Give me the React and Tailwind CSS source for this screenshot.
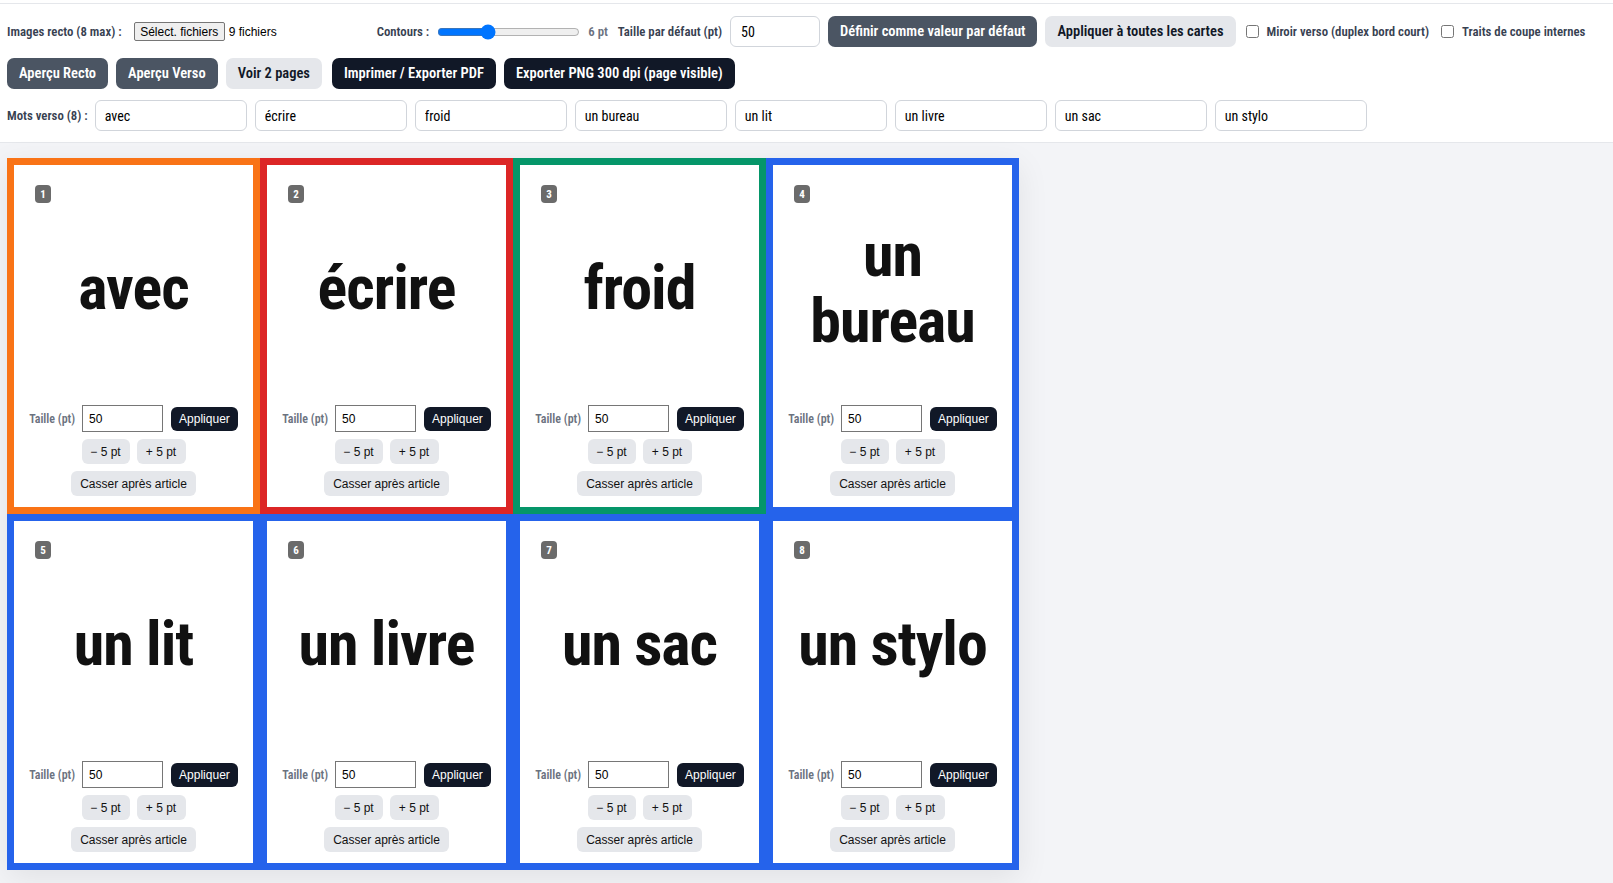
import React from "react";

const words = ["avec", "écrire", "froid", "un bureau", "un lit", "un livre", "un sac", "un stylo"];
const borders = [
  "border-[#f97316]",
  "border-[#dc2626]",
  "border-[#059669]",
  "border-[#2563eb]",
  "border-[#2563eb]",
  "border-[#2563eb]",
  "border-[#2563eb]",
  "border-[#2563eb]",
];

const COND = "font-['Roboto_Condensed','Roboto','DejaVu_Sans_Condensed',sans-serif] font-stretch-condensed";
const ARIAL = "font-['Liberation_Sans','Arial',sans-serif]";

function Card({ word, idx }) {
  return (
    <div className={`relative flex h-[356px] w-[253px] flex-col border-[7px] bg-white ${borders[idx]}`}>
      <span
        className={`absolute left-[21px] top-[20px] flex h-[18px] w-[16px] items-center justify-center rounded-[4px] bg-[#6b6b6b] text-[11px] font-bold leading-none text-white ${COND}`}
      >
        {idx + 1}
      </span>
      <div className="flex flex-1 items-center justify-center px-2 pt-[6px] text-center">
        <span className={`text-[62px] font-bold leading-[1.06] tracking-[-1px] text-[#111111] ${COND}`}>{word}</span>
      </div>
      <div className={`flex flex-col items-center gap-[7px] pb-[11px] ${ARIAL}`}>
        <div className="flex items-center">
          <span className={`mr-[7px] text-[12px] font-semibold text-[#6b7280] ${COND}`}>Taille (pt)</span>
          <input
            readOnly
            value="50"
            className="h-[27px] w-[81px] border border-[#767676] bg-white pl-[6px] text-[12px] text-black outline-none"
          />
          <button className="ml-[8px] h-[24px] rounded-[6px] bg-[#111827] px-2 text-[12px] text-white">
            Appliquer
          </button>
        </div>
        <div className="flex items-center gap-[7px]">
          <button className="h-[25px] w-[48px] rounded-[6px] bg-[#e5e7eb] text-[12px] text-[#111111]">− 5 pt</button>
          <button className="h-[25px] w-[49px] rounded-[6px] bg-[#e5e7eb] text-[12px] text-[#111111]">+ 5 pt</button>
        </div>
        <button className="h-[25px] rounded-[6px] bg-[#e5e7eb] px-[9px] text-[12px] text-[#111111]">
          Casser après article
        </button>
      </div>
    </div>
  );
}

export default function App() {
  return (
    <div className="min-h-screen bg-[#f3f4f7]">
      <div className="h-[3px] bg-white" />
      <header className={`border-y border-[#e5e7eb] bg-white px-[7px] pb-[11px] pt-[12px] ${COND}`}>
        <div className="flex flex-col gap-[11px]">
          {/* Row 1 */}
          <div className="flex h-[31px] items-center gap-2 whitespace-nowrap">
            <span className="text-[12.8px] font-semibold text-[#374151]">Images recto (8 max) :</span>
            <span className={`ml-1 flex w-[235px] items-center ${ARIAL}`}>
              <span className="flex h-[19px] w-[91px] items-center justify-center rounded-[2px] border border-[#767676] bg-[#efefef] text-[12px] text-black">
                Sélect. fichiers
              </span>
              <span className="ml-[4px] text-[12px] text-black">9 fichiers</span>
            </span>
            <span className="text-[12.8px] font-semibold text-[#374151]">Contours :</span>
            <input type="range" min="1" max="16" defaultValue="6" className="h-[16px] w-[143px] accent-[#0075ff]" />
            <span className="text-[12.8px] font-semibold text-[#6b7280]">6 pt</span>
            <span className="ml-[2px] text-[12.8px] font-semibold text-[#374151]">Taille par défaut (pt)</span>
            <input
              readOnly
              value="50"
              className="h-[31px] w-[90px] rounded-[6px] border border-[#d1d5db] bg-white px-[10px] text-[14px] text-black outline-none"
            />
            <button className="h-[31px] rounded-[7px] bg-[#4b5563] px-3 text-[14.5px] font-semibold text-white">
              Définir comme valeur par défaut
            </button>
            <button className="h-[31px] rounded-[7px] bg-[#e5e7eb] px-3 text-[14.5px] font-semibold text-[#111827]">
              Appliquer à toutes les cartes
            </button>
            <label className="ml-[2px] flex items-center gap-[8px] text-[12.8px] font-semibold text-[#374151]">
              <input type="checkbox" className="h-[13px] w-[13px]" />
              Miroir verso (duplex bord court)
            </label>
            <label className="ml-[4px] flex items-center gap-[8px] text-[12.8px] font-semibold text-[#374151]">
              <input type="checkbox" className="h-[13px] w-[13px]" />
              Traits de coupe internes
            </label>
          </div>
          {/* Row 2 */}
          <div className="flex h-[31px] items-center gap-2 whitespace-nowrap">
            <button className="h-[31px] rounded-[7px] bg-[#4b5563] px-3 text-[14.5px] font-semibold text-white">Aperçu Recto</button>
            <button className="h-[31px] rounded-[7px] bg-[#4b5563] px-3 text-[14.5px] font-semibold text-white">Aperçu Verso</button>
            <button className="h-[31px] rounded-[7px] bg-[#e5e7eb] px-3 text-[14.5px] font-semibold text-[#111827]">Voir 2 pages</button>
            <button className="ml-[2px] h-[31px] rounded-[7px] bg-[#111827] px-3 text-[14.5px] font-semibold text-white">
              Imprimer / Exporter PDF
            </button>
            <button className="h-[31px] rounded-[7px] bg-[#111827] px-3 text-[14.5px] font-semibold text-white">
              Exporter PNG 300 dpi (page visible)
            </button>
          </div>
          {/* Row 3 */}
          <div className="flex h-[31px] items-center gap-2 whitespace-nowrap">
            <span className="mr-[-1px] text-[12.8px] font-semibold text-[#374151]">Mots verso (8) :</span>
            {words.map((w) => (
              <input
                key={w}
                readOnly
                value={w}
                className="h-[31px] w-[152px] rounded-[6px] border border-[#d1d5db] bg-white px-[9px] text-[14px] text-black outline-none"
              />
            ))}
          </div>
        </div>
      </header>
      <main className="pl-[7px] pt-[15px]">
        <div className="inline-grid grid-cols-4 shadow-[0_8px_30px_rgba(0,0,0,0.08)]">
          {words.map((w, i) => (
            <Card key={w} word={w} idx={i} />
          ))}
        </div>
      </main>
    </div>
  );
}
